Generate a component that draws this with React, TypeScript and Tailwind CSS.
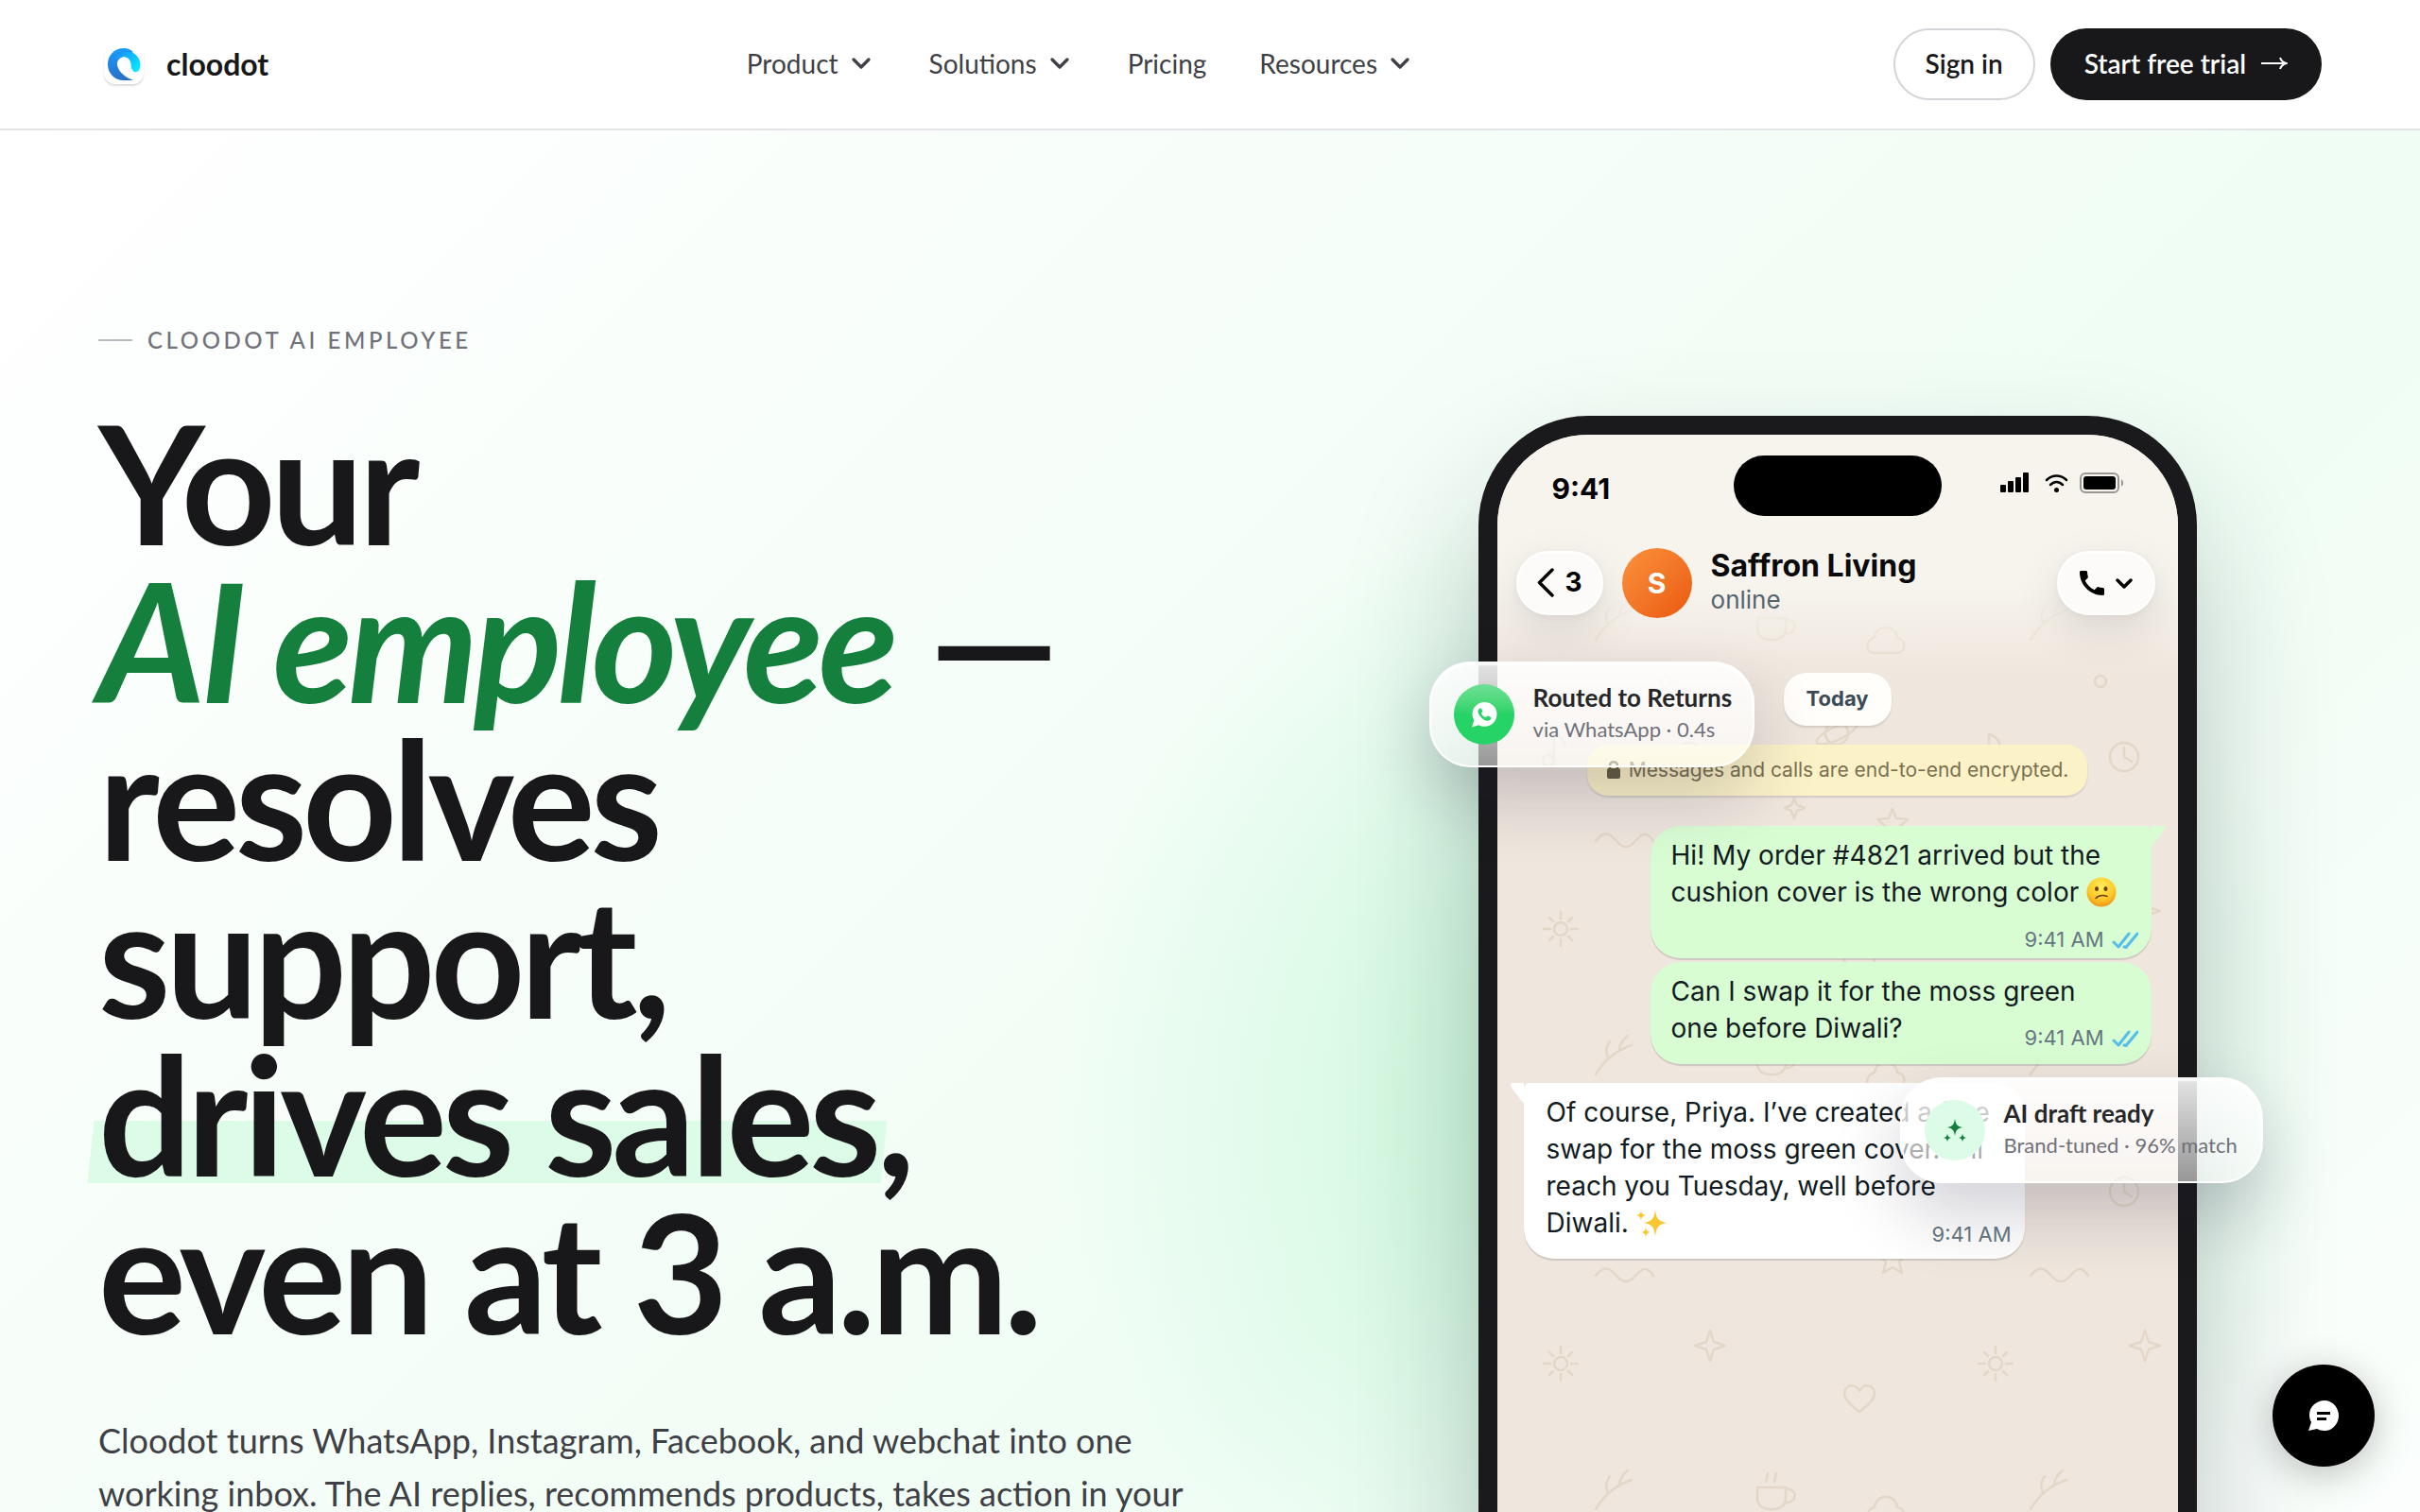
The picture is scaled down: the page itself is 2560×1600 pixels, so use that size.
import React from 'react';
import { ChevronDown } from 'lucide-react';

const navItems = [
  { label: 'Product', menu: true },
  { label: 'Solutions', menu: true },
  { label: 'Pricing', menu: false },
  { label: 'Resources', menu: true },
];

const Logo: React.FC = () => (
  <span className="flex size-[42px] items-center justify-center rounded-xl bg-white shadow-[0_2px_2px_rgba(0,0,0,0.14)]">
    <svg width="36" height="34" viewBox="0 0 36 34" aria-hidden="true">
      <defs>
        <linearGradient id="logo-a" x1="0" y1="0" x2="0" y2="1">
          <stop offset="0" stopColor="#1a9bfb" />
          <stop offset="1" stopColor="#2a6fc9" />
        </linearGradient>
        <linearGradient id="logo-b" x1="0" y1="0" x2="1" y2="1">
          <stop offset="0" stopColor="#1a8cff" />
          <stop offset="1" stopColor="#00f6ff" />
        </linearGradient>
      </defs>
      <path d="M18 0C8 0 1 7.500 1 17s7 17 17 17h10c-8-3-14-8-16-13C9 14 13 10 18 9l10-5C25 1.500 22 0 18 0Z" fill="url(#logo-a)" />
      <path d="M9 13C13 4 22 2 28 5c6 3.500 8.500 10 7 16-1 5-7 6-9 0-.5-4 0-11-8-12-4 0-6 1.500-9 4Z" fill="url(#logo-b)" />
    </svg>
  </span>
);

const Header: React.FC = () => (
  <header className="relative z-20 flex h-[138px] shrink-0 items-center justify-between border-b-2 border-[#e4e4e7] bg-white px-[104px]">
    <a href="#home" className="flex items-center gap-6 pl-1.5 text-[32px] leading-10 font-bold text-[#18181b]">
      <Logo />
      cloodot
    </a>
    <nav className="flex items-center gap-14 pb-0.5 text-[28px] leading-9 text-[#3f3f46]">
      {navItems.map((item) =>
        item.menu ? (
          <button key={item.label} type="button" className="flex items-center gap-2">
            {item.label}
            <ChevronDown size={32} strokeWidth={2.5} />
          </button>
        ) : (
          <a key={item.label} href="#pricing">{item.label}</a>
        )
      )}
    </nav>
    <div className="flex items-center gap-4 text-[28px] font-semibold">
      <button type="button" className="h-[76px] rounded-full border-2 border-[#d4d4d8] px-8 pb-0.5 text-[#18181b]">
        Sign in
      </button>
      <button type="button" className="flex h-[76px] items-center gap-4 rounded-full bg-[#18181b] px-9 pb-0.5 text-white">
        Start free trial
        <svg width="28" height="16" viewBox="0 0 28 16" fill="none" stroke="currentColor" strokeWidth="2" aria-hidden="true">
          <path d="M0 8h26M20 2c1 3 3 5 6.500 6C23 9 21 11 20 14" />
        </svg>
      </button>
    </div>
  </header>
);

/* Doodles of the chat wallpaper, repeated as a 460px tile */
const Wallpaper: React.FC = () => (
  <svg className="absolute inset-0 size-full" aria-hidden="true">
    <defs>
      <pattern id="doodles" width="460" height="460" patternUnits="userSpaceOnUse">
        <g fill="none" stroke="#e3d8c8" strokeWidth="2.500" strokeLinecap="round" strokeLinejoin="round">
          <circle cx="67" cy="63" r="7" />
          <path d="M67 45v7M67 74v7M49 63h7M78 63h7M55 51l4 4M75 71l4 4M79 51l-4 4M59 71l-4 4" />
          <path d="M225 28l4 12 12 4-12 4-4 12-4-12-12-4 12-4Z" />
          <path d="M314 385l3 7 8 3-8 3-3 8-3-8-7-3 7-3Z" />
          <path d="M383 114c-9-7-16-13-16-19 0-10 12-12 16-3 4-9 16-7 16 3 0 6-7 12-16 19Z" />
          <path d="M104 217c9-15 20-25 38-31M117 200c-3-8-2-12 2-18M129 192c0-7 3-11 9-16" />
          <path d="M275 194h30v12c0 15-30 15-30 0ZM305 196c13-2 13 16-1 14M284 188l2-9M293 188l2-9" />
          <path d="M398 231c-9-1-9-14 1-16 2-15 22-15 24 0 10 1 10 15 0 16Z" />
          <path d="M104 430c9-12 15-8 22 0s13 8 20 0 12-11 19 0" />
          <path d="M418 396l4 10 12 1-9 8 3 12-10-6-10 6 3-12-9-8 12-1Z" />
          <circle cx="203" cy="341" r="15" />
          <path d="M203 331v10l8 5" />
          <circle cx="178" cy="261" r="6" />
          <circle cx="54" cy="345" r="6" />
          <path d="M60 345v-28c6 1 10 5 12 12" />
          <circle cx="359" cy="316" r="12" />
          <ellipse cx="359" cy="316" rx="23" ry="7" transform="rotate(-25 359 316)" />
        </g>
      </pattern>
    </defs>
    <rect width="100%" height="100%" fill="url(#doodles)" />
  </svg>
);

const StatusIcons: React.FC = () => (
  <svg width="130" height="24" viewBox="0 0 130 24" aria-hidden="true">
    <rect x="0" y="14" width="6" height="8" rx="1" />
    <rect x="8" y="10" width="6" height="12" rx="1" />
    <rect x="16" y="6" width="6" height="16" rx="1" />
    <rect x="24" y="1" width="6" height="21" rx="1" />
    <g fill="none" stroke="#000" strokeWidth="2.500" strokeLinecap="round">
      <path d="M49 9c6-6 15-6 21 0" />
      <path d="M53 14c4-4 9-4 13 0" />
    </g>
    <circle cx="59.500" cy="19.500" r="2.500" />
    <rect x="85" y="2" width="40" height="20" rx="5" fill="none" stroke="#9a9792" strokeWidth="2" />
    <rect x="88" y="5" width="34" height="14" rx="3" />
    <path d="M128 8v8c3-2 3-6 0-8Z" fill="#9a9792" />
  </svg>
);

const ConfusedFace: React.FC = () => (
  <svg className="inline-block align-[-6px]" width="32" height="32" viewBox="0 0 32 32" role="img" aria-label="confused face">
    <defs>
      <radialGradient id="face" cx=".5" cy=".3" r=".75">
        <stop offset="0" stopColor="#ffec5e" />
        <stop offset=".6" stopColor="#fdc928" />
        <stop offset="1" stopColor="#f08a12" />
      </radialGradient>
    </defs>
    <circle cx="16" cy="16" r="15.500" fill="url(#face)" />
    <ellipse cx="11" cy="12.500" rx="2" ry="2.600" fill="#6b3d0c" />
    <ellipse cx="20.500" cy="12.500" rx="2" ry="2.600" fill="#6b3d0c" />
    <path d="M10 22.500c3-3 8-3.500 12-2" fill="none" stroke="#6b3d0c" strokeWidth="1.500" strokeLinecap="round" />
  </svg>
);

const Sparkles: React.FC = () => (
  <svg className="inline-block align-[-6px]" width="32" height="32" viewBox="0 0 32 32" role="img" aria-label="sparkles">
    <g fill="#fcc62f">
      <path d="M20 2c1 9 2.500 12 12 14-9.500 2-11 5-12 15-1-10-2.500-13-12-15 9.500-2 11-5 12-14Z" />
      <path d="M5 2c.5 4 1 5 5 6-4 1-4.500 2-5 6-.5-4-1-5-5-6 4-1 4.500-2 5-6Z" />
      <path d="M10 20c.5 4 1 5 4.500 6-3.500 1-4 2-4.500 6-.5-4-1-5-4.500-6 3.500-1 4-2 4.500-6Z" />
    </g>
  </svg>
);

const Ticks: React.FC = () => (
  <svg width="28" height="18" viewBox="0 0 28 18" fill="none" stroke="#53bdeb" strokeWidth="3" strokeLinecap="round" strokeLinejoin="round" aria-hidden="true">
    <path d="M2 11l5 5L18 2M13 16l2 .5L27 2" />
  </svg>
);

interface BubbleProps {
  children: React.ReactNode;
  sent?: boolean;
  tail?: boolean;
  className?: string;
  timeClass: string;
}

const Bubble: React.FC<BubbleProps> = ({ children, sent, tail, className = '', timeClass }) => (
  <div
    className={`relative w-[530px] rounded-[32px] pt-3 text-[28px] leading-[39px] text-[#111b21] shadow-[0_2px_1px_rgba(11,20,26,0.14)] ${
      sent ? 'self-end bg-[#d9fdd3] pl-[22px] pr-4' : 'self-start bg-white pl-6 pr-4'
    } ${className}`}
  >
    {tail && (
      <svg
        className={`absolute top-0 ${sent ? '-right-3.5' : '-left-3.5 -scale-x-100'}`}
        width="14"
        height="22"
        viewBox="0 0 14 22"
        fill={sent ? '#d9fdd3' : '#fff'}
        aria-hidden="true"
      >
        <path d="M0 0h11c3 0 4 2 2 5L0 22Z" />
      </svg>
    )}
    <p>{children}</p>
    <span className={`absolute right-3.5 flex items-center gap-2 text-[22px] leading-[27px] text-[#667781] ${timeClass}`}>
      9:41 AM
      {sent && <Ticks />}
    </span>
  </div>
);

interface FloatCardProps {
  icon: React.ReactNode;
  title: string;
  detail: string;
  className: string;
}

const FloatCard: React.FC<FloatCardProps> = ({ icon, title, detail, className }) => (
  <div
    className={`absolute flex h-28 items-center gap-5 rounded-[44px] border-2 border-white/90 bg-linear-to-b from-white/88 to-white/55 px-6 whitespace-nowrap shadow-[0_32px_72px_rgba(24,24,56,0.2),inset_0_2px_2px_rgba(255,255,255,0.9)] ${className}`}
  >
    {icon}
    <div className="flex flex-col pb-0.5">
      <span className="text-[26px] leading-[34px] font-bold text-[#27272a]">{title}</span>
      <span className="text-[22px] leading-[34px] text-[#71717a]">{detail}</span>
    </div>
  </div>
);

const Phone: React.FC = () => (
  <div className="relative h-[1560px] w-[760px] shrink-0 rounded-[116px] bg-[#1a1a1c] p-5 font-[Inter,sans-serif] shadow-[0_80px_160px_-20px_rgba(20,30,40,0.32)]">
    <div className="relative h-full overflow-hidden rounded-[96px] bg-[#efe6dd]">
      <Wallpaper />
      <div className="absolute inset-x-0 top-0 h-[260px] bg-linear-to-b from-[#f7f4ee] from-60% to-[#f7f4ee]/0" />

      <div className="relative flex flex-col">
        {/* Status bar */}
        <div className="grid grid-cols-[1fr_auto_1fr] items-center px-[58px] pt-[22px]">
          <span className="pt-1.5 text-[30px] leading-9 font-bold text-black">9:41</span>
          <div className="h-16 w-[220px] rounded-full bg-black" />
          <div className="flex justify-end pb-1.5">
            <StatusIcons />
          </div>
        </div>

        {/* Contact */}
        <div className="mt-[34px] flex items-center pr-6 pl-5">
          <button type="button" className="flex h-[68px] w-[92px] items-center justify-center gap-3 rounded-full border-2 border-white bg-[#fcfbf9] pb-0.5 text-[28px] font-bold text-black shadow-[0_16px_48px_rgba(0,0,0,0.1),0_2px_8px_rgba(0,0,0,0.05)]">
            <svg width="18" height="31" viewBox="0 0 18 31" fill="none" stroke="currentColor" strokeWidth="3.500" strokeLinecap="round" strokeLinejoin="round" aria-hidden="true">
              <path d="M16 2L2.500 15.500L16 29" />
            </svg>
            3
          </button>
          <div className="ml-5 flex size-[74px] items-center justify-center rounded-full bg-linear-to-br from-[#fb923c] to-[#ea580c] text-[30px] font-bold text-white">
            S
          </div>
          <div className="ml-5 flex flex-1 flex-col pb-0.5">
            <span className="text-[32px] leading-[38px] font-bold text-[#0a0a0a]">Saffron Living</span>
            <span className="text-[26px] leading-[34px] text-[#54656f]">online</span>
          </div>
          <button type="button" aria-label="Call" className="flex h-[68px] w-[104px] items-center justify-center gap-3 rounded-full border-2 border-white bg-[#fcfbf9] text-black shadow-[0_16px_48px_rgba(0,0,0,0.1),0_2px_8px_rgba(0,0,0,0.05)]">
            <svg width="26" height="26" viewBox="0 0 26 26" fill="currentColor" aria-hidden="true">
              <path d="M1.500 0h5C7.500 0 8 .6 8 1.400c.1 1.700.4 3.200.8 4.700.2.700 0 1.200-.4 1.600L5.700 10.400c2.200 4.300 5.600 7.700 9.900 9.900l2.700-2.700c.4-.4.9-.6 1.600-.4 1.500.5 3 .8 4.700.8.8.1 1.400.6 1.400 1.500v5c0 .9-.6 1.500-1.500 1.500C11 26 0 15 0 1.500 0 .6.600 0 1.500 0Z" />
            </svg>
            <svg width="18" height="11" viewBox="0 0 18 11" fill="none" stroke="currentColor" strokeWidth="3.500" strokeLinecap="round" strokeLinejoin="round" aria-hidden="true">
              <path d="M2 2l7 7 7-7" />
            </svg>
          </button>
        </div>

        {/* Conversation */}
        <div className="mt-[58px] flex flex-col px-7">
          <span className="flex h-14 items-center self-center rounded-[24px] bg-[#fffefb] px-6 pb-0.5 text-[22px] font-bold text-[#3b4a54] shadow-[0_2px_2px_rgba(11,20,26,0.12)]">
            Today
          </span>
          <div className="mt-5 flex h-[54px] items-center gap-2 self-center rounded-[22px] bg-[#fcf2c8] px-5 text-[21px] whitespace-nowrap text-[#7a7050] shadow-[0_2px_2px_rgba(11,20,26,0.12)]">
            <svg width="16" height="20" viewBox="0 0 16 20" aria-hidden="true">
              <path d="M4 9V5c0-5 8-5 8 0v4" fill="none" stroke="#665f42" strokeWidth="2.500" />
              <rect x="1" y="8" width="14" height="11" rx="2" fill="#665f42" />
            </svg>
            Messages and calls are end-to-end encrypted.
          </div>
          <Bubble sent tail className="mt-8 rounded-tr-[6px] pb-[50px]" timeClass="bottom-1.5">
            Hi! My order #4821 arrived but the
            <br />
            cushion cover is the wrong color <ConfusedFace />
          </Bubble>
          <Bubble sent className="mt-1 pb-[18px]" timeClass="bottom-3.5">
            Can I swap it for the moss green
            <br />
            one before Diwali?
          </Bubble>
          <Bubble tail className="mt-5 rounded-tl-[6px] pb-[18px]" timeClass="bottom-3">
            Of course, Priya. I’ve created a free
            <br />
            swap for the moss green cover. It’ll
            <br />
            reach you Tuesday, well before
            <br />
            Diwali. <Sparkles />
          </Bubble>
        </div>
      </div>
    </div>

    <FloatCard
      className="top-[260px] -left-[52px] w-[344px] font-[Lato,sans-serif]"
      title="Routed to Returns"
      detail="via WhatsApp · 0.4s"
      icon={
        <span className="flex size-16 shrink-0 items-center justify-center rounded-full bg-linear-to-b from-[#6fe096] to-[#25d366] to-50%">
          <svg width="28" height="28" viewBox="0 0 28 28" aria-hidden="true">
            <path d="M14.500 1C7.300 1 1.500 6.600 1.500 13.700c0 2.400.7 4.600 1.800 6.500L1 27.500l7.400-2.200c1.800 1 3.900 1.500 6.100 1.500C21.700 26.800 27.500 21 27.500 13.800S21.700 1 14.500 1Z" fill="#fff" />
            <path d="M10 7.500c-3 1-3.500 4-.5 8 3.500 4.500 8 6.500 10.500 4.500 1.500-1 1.500-2.500 1-3l-3-1.500c-1-.3-1.500 2-2.500 1.600-2-.8-3.800-2.600-4.500-4.200-.3-.8 1.500-1.500 1.200-2.500L11 7.800c-.2-.3-.5-.4-1-.3Z" fill="#25d366" />
          </svg>
        </span>
      }
    />
    <FloatCard
      className="top-[700px] -right-[70px] w-[384px] font-[Lato,sans-serif]"
      title="AI draft ready"
      detail="Brand-tuned · 96% match"
      icon={
        <span className="flex size-16 shrink-0 items-center justify-center rounded-full bg-[#dcfce7]">
          <svg width="24" height="24" viewBox="0 0 24 24" fill="#15803d" aria-hidden="true">
            <path d="M12 0c1 6 2.500 8 8 9-5.500 1-7 3-8 9-1-6-2.500-8-8-9 5.500-1 7-3 8-9Z" />
            <path d="M4 15.500c.5 3 1.500 4 4 4.500-2.500.5-3.500 1.500-4 4-.5-2.500-1.500-3.500-4-4 2.500-.5 3.500-1.500 4-4.500ZM20 15.500c.5 3 1.500 4 4 4.500-2.500.5-3.500 1.500-4 4-.5-2.500-1.500-3.500-4-4 2.500-.5 3.500-1.500 4-4.500Z" />
          </svg>
        </span>
      }
    />
  </div>
);

const Hero: React.FC = () => (
  <main className="relative grid flex-1 grid-cols-[1.17fr_1fr] items-start gap-32 bg-linear-135 from-white via-[#effdf4] via-60% to-white px-[104px]">
    <section className="relative z-10 pt-[204px]">
      <p className="flex items-center gap-4 text-[24px] leading-9 font-medium tracking-[0.15em] text-[#71717a]">
        <span className="h-0.5 w-9 bg-[#b9babf]" />
        CLOODOT AI EMPLOYEE
      </p>
      <h1 className="mt-12 text-[174px] leading-[167px] font-bold tracking-[-0.03em] whitespace-nowrap text-[#18181b]">
        Your
        <br />
        <em className="text-[#15803d]">AI employee</em> —
        <br />
        resolves
        <br />
        support,
        <br />
        <span className="relative isolate">
          <span className="absolute inset-x-[-8px] bottom-[30px] -z-10 h-[66px] -skew-x-6 bg-[#dcfce7]" />
          drives sales
        </span>
        ,
        <br />
        even at 3 a.m.
      </h1>
      <p className="mt-[68px] text-[36px] leading-[56px] text-[#3f3f46]">
        Cloodot turns WhatsApp, Instagram, Facebook, and webchat into one
        <br />
        working inbox. The AI replies, recommends products, takes action in your
      </p>
    </section>

    <section className="relative flex justify-center pt-[302px]">
      {/* Soft glow behind the phone */}
      <div className="absolute top-[340px] -left-[311px] size-[1360px] bg-[radial-gradient(closest-side,rgba(134,239,172,0.45),rgba(134,239,172,0))]" />
      <Phone />
    </section>
  </main>
);

export default function App() {
  return (
    <div className="flex h-screen flex-col overflow-hidden bg-white font-[Lato,sans-serif]">
      <Header />
      <Hero />
      <button
        type="button"
        aria-label="Open chat"
        className="fixed right-12 bottom-12 z-30 flex size-[108px] items-center justify-center rounded-full bg-black shadow-[0_8px_40px_rgba(0,0,0,0.25)]"
      >
        <svg width="34" height="34" viewBox="0 0 34 34" aria-hidden="true">
          <path d="M18 1C9 1 2 8 2 16c0 3 .5 5 2 8L1 33l9-2c2 1 5 2 8 2 9 0 15-8 15-16S27 1 18 1Z" fill="#fff" />
          <path d="M10 14.500h14M10 20.500h10" stroke="#000" strokeWidth="3" />
        </svg>
      </button>
    </div>
  );
}
